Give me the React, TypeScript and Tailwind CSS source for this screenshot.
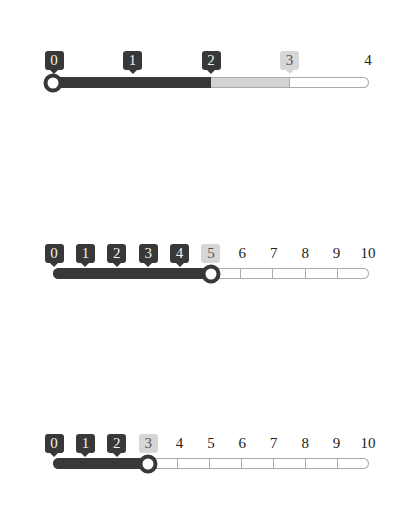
type Kind = "dark" | "light" | "lightTail" | "plain";
type Seg = "dark" | "gray" | "empty";

function Label({ n, kind }: { n: number; kind: Kind }) {
  if (kind === "plain") {
    return (
      <div className="flex w-0 justify-center">
        <span className="block h-[19px] shrink-0 text-[15px] leading-[19px] text-[#222]">{n}</span>
      </div>
    );
  }
  const dark = kind === "dark";
  return (
    <div className="flex w-0 flex-col items-center">
      <span
        className={
          dark
            ? "block h-[19px] w-[19px] shrink-0 rounded-[3px] bg-[#383838] text-center text-[15px] leading-[19px] text-[#f2f2f2]"
            : "block h-[19px] w-[19px] shrink-0 rounded-[3px] bg-[#d6d6d6] text-center text-[15px] leading-[19px] text-[#555]"
        }
      >
        {n}
      </span>
      {dark && <span className="h-0 w-0 border-x-4 border-t-4 border-x-transparent border-t-[#383838]" />}
      {kind === "lightTail" && <span className="h-0 w-0 border-x-4 border-t-4 border-x-transparent border-t-[#d6d6d6]" />}
    </div>
  );
}

function Slider({ labels, segs, handle, gap }: { labels: Kind[]; segs: Seg[]; handle: string; gap: string }) {
  return (
    <div className="w-[316px]">
      <div className="ml-px flex h-[23px] w-[314px] items-start justify-between">
        {labels.map((k, i) => (
          <Label key={i} n={i} kind={k} />
        ))}
      </div>
      <div className={"relative " + gap}>
        <div className="flex h-[11px] overflow-hidden rounded-full bg-white shadow-[inset_0_0_0_1px_#aaa]">
          {segs.map((s, i) => {
            const last = i === segs.length - 1;
            if (s === "dark") return <div key={i} className="flex-1 bg-[#383838]" />;
            if (s === "gray")
              return <div key={i} className={"flex-1 border-y border-[#aaa] bg-[#d3d3d3]" + (last ? "" : " border-r")} />;
            return <div key={i} className={last ? "flex-1" : "flex-1 border-r border-[#aaa]"} />;
          })}
        </div>
        <div
          className={
            "absolute top-1/2 size-[19px] -translate-x-1/2 -translate-y-1/2 rounded-full border-4 border-[#383838] bg-white " +
            handle
          }
        />
      </div>
    </div>
  );
}

export default function App() {
  return (
    <div className="flex min-h-[519px] w-full flex-col bg-white pt-[51px] pl-[53px] font-['Liberation_Serif',serif]">
      <Slider
        labels={["dark", "dark", "dark", "lightTail", "plain"]}
        segs={["dark", "dark", "gray", "empty"]}
        handle="left-0"
        gap="mt-[3px]"
      />
      <div className="mt-[156px]">
        <Slider
          labels={["dark", "dark", "dark", "dark", "dark", "light", "plain", "plain", "plain", "plain", "plain"]}
          segs={["dark", "dark", "dark", "dark", "dark", "empty", "empty", "empty", "empty", "empty"]}
          handle="left-[158px]"
          gap="mt-[1px]"
        />
      </div>
      <div className="mt-[155px]">
        <Slider
          labels={["dark", "dark", "dark", "light", "plain", "plain", "plain", "plain", "plain", "plain", "plain"]}
          segs={["dark", "dark", "dark", "empty", "empty", "empty", "empty", "empty", "empty", "empty"]}
          handle="left-[95px]"
          gap="mt-[1px]"
        />
      </div>
    </div>
  );
}
